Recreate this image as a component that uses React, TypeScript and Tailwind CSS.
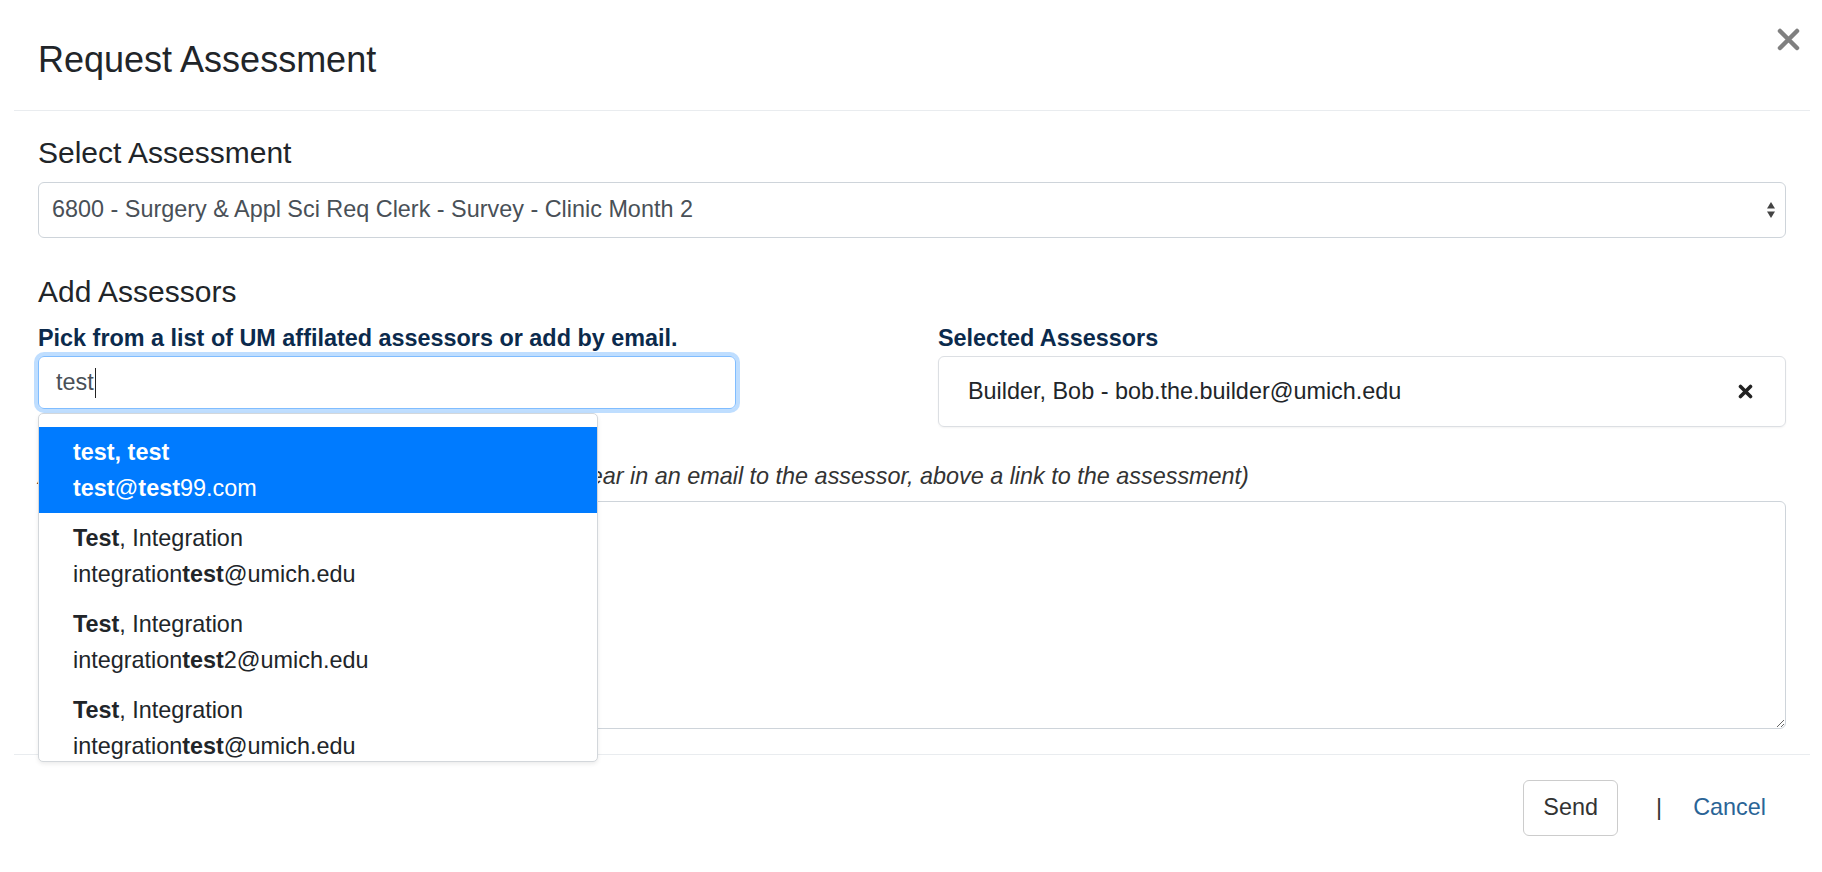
import React from 'react';

const font = { fontFamily: '"Liberation Sans", Arial, Helvetica, sans-serif' };

interface Suggestion {
    name: React.ReactNode;
    email: React.ReactNode;
    active?: boolean;
}

const suggestions: Suggestion[] = [
    { name: <b>test, test</b>, email: <><b>test</b>@<b>test</b>99.com</>, active: true },
    { name: <><b>Test</b>, Integration</>, email: <>integration<b>test</b>@umich.edu</> },
    { name: <><b>Test</b>, Integration</>, email: <>integration<b>test</b>2@umich.edu</> },
    { name: <><b>Test</b>, Integration</>, email: <>integration<b>test</b>@umich.edu</> },
];

function CloseIcon() {
    return (
        <svg width="23" height="23" viewBox="0 0 23 23">
            <path d="M3 3 L20 20 M20 3 L3 20" stroke="#808080" strokeWidth={4.5} strokeLinecap="round" />
        </svg>
    );
}

function RemoveIcon() {
    return (
        <svg width="15" height="15" viewBox="0 0 15 15">
            <path d="M2.5 2.5 L12.5 12.5 M12.5 2.5 L2.5 12.5" stroke="#222" strokeWidth={3.6} strokeLinecap="round" />
        </svg>
    );
}

function SelectArrows() {
    return (
        <svg width="10" height="18" viewBox="0 0 10 18">
            <path d="M5 1 L9 7.5 L1 7.5 Z" fill="#444" />
            <path d="M5 17 L9 10.5 L1 10.5 Z" fill="#444" />
        </svg>
    );
}

export default function App() {
    return (
        <div className="w-full h-[872px] bg-white pl-[14px] pr-[12px] text-[#212529] overflow-hidden" style={font}>
            {/* header */}
            <div className="h-[111px] border-b border-[#e9ecef] flex justify-between items-start">
                <h4 className="pl-[24px] pt-[33px] text-[36px] leading-[54px] font-normal text-[#212529]">Request Assessment</h4>
                <button type="button" className="mt-[28px] mr-[10px]">
                    <CloseIcon />
                </button>
            </div>

            {/* body */}
            <div className="px-[24px] pb-[25px]">
                <h5 className="mt-[24px] text-[30px] leading-[36px] font-normal">Select Assessment</h5>
                <div className="mt-[11px] h-[56px] border border-[#ced4da] rounded-[6px] flex items-center justify-between pl-[13px] pr-[9px] text-[23.4px] text-[#495057]">
                    <span>6800 - Surgery &amp; Appl Sci Req Clerk - Survey - Clinic Month 2</span>
                    <SelectArrows />
                </div>

                <h5 className="mt-[36px] text-[30px] leading-[36px] font-normal">Add Assessors</h5>

                <div className="flex gap-[202px]">
                    <div className="w-[698px] shrink-0">
                        <label className="block mt-[11px] text-[23.4px] leading-[35px] font-bold text-[#0b2a4c]">
                            Pick from a list of UM affilated assessors or add by email.
                        </label>
                        <div className="relative">
                            <div className="h-[53px] border border-[#80bdff] rounded-[6px] shadow-[0_0_0_4px_rgba(0,123,255,0.25)] flex items-center pl-[17px] text-[23.4px] text-[#495057]">
                                <span>test</span>
                                <span className="inline-block w-px h-[30px] bg-[#222] ml-px"></span>
                            </div>

                            <div className="absolute left-0 top-[57px] w-[560px] h-[349px] overflow-hidden bg-white border border-[#d3d7db] rounded-[5px] shadow-[0_2px_4px_rgba(0,0,0,0.08)] pt-[13px] z-10">
                                {suggestions.map((s, i) => (
                                    <div
                                        key={i}
                                        className={`h-[86px] pt-[7px] pl-[34px] text-[23.4px] leading-[36px] ${s.active ? 'bg-[#007bff] text-white font-bold' : 'text-[#212529]'}`}
                                    >
                                        <div>{s.name}</div>
                                        <div className={s.active ? 'font-normal' : ''}>{s.email}</div>
                                    </div>
                                ))}
                            </div>
                        </div>
                    </div>

                    <div className="flex-1">
                        <label className="block mt-[11px] text-[23.4px] leading-[35px] font-bold text-[#0b2a4c]">Selected Assessors</label>
                        <div className="h-[71px] border border-[#dcdfe3] rounded-[6px] shadow-[0_1px_2px_rgba(0,0,0,0.05)] flex items-center justify-between pl-[29px] pr-[32px] text-[23.4px] text-[#212529]">
                            <span>Builder, Bob - bob.the.builder@umich.edu</span>
                            <RemoveIcon />
                        </div>
                    </div>
                </div>

                <label className="block mt-[32px] text-[23.4px] leading-[35px] italic text-[#333]">
                    A Personal Message (Optional, this message will appear in an email to the assessor, above a link to the assessment)
                </label>
                <textarea className="block mt-[7px] w-full h-[228px] border border-[#ced4da] rounded-[6px] outline-none" />
            </div>

            {/* footer */}
            <div className="border-t border-[#e9ecef] pt-[25px] pr-[44px] flex justify-end items-center text-[23.4px]">
                <button type="button" className="w-[95px] h-[56px] border border-[#ccc] rounded-[6px] bg-white text-[#333]">Send</button>
                <span className="ml-[38px] text-[#333]">|</span>
                <a href="#" className="ml-[31px] text-[#2a6496]">Cancel</a>
            </div>
        </div>
    );
}
